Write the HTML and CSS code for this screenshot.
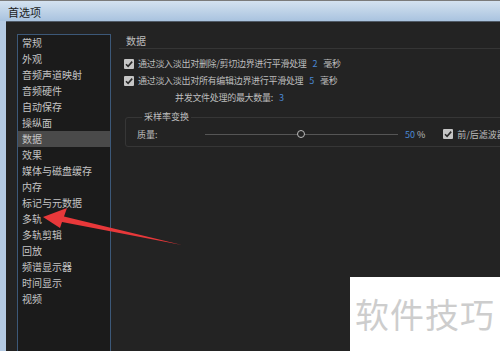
FILE: index.html
```html
<!DOCTYPE html>
<html lang="zh-CN">
<head>
    <meta charset="UTF-8">
    <meta name="viewport" content="width=device-width, initial-scale=1.0">
    <title>首选项</title>
    <link rel="stylesheet" href="styles.css">
</head>
<body>
    <div class="window">
        <div class="titlebar">首选项</div>
        <div class="frame">
            <div class="dialog">
                <!-- category list -->
                <ul class="sidebar">
                    <li>常规</li>
                    <li>外观</li>
                    <li>音频声道映射</li>
                    <li>音频硬件</li>
                    <li>自动保存</li>
                    <li>操纵面</li>
                    <li class="active">数据</li>
                    <li>效果</li>
                    <li>媒体与磁盘缓存</li>
                    <li>内存</li>
                    <li>标记与元数据</li>
                    <li>多轨</li>
                    <li>多轨剪辑</li>
                    <li>回放</li>
                    <li>频谱显示器</li>
                    <li>时间显示</li>
                    <li>视频</li>
                </ul>

                <!-- settings panel -->
                <div class="panel">
                    <div class="panel-title">数据</div>
                    <div class="row">
                        <span class="check"><svg width="10" height="10" viewBox="0 0 10 10"><path d="M2 5.2 L4.1 7.3 L8.2 2.6" fill="none" stroke="#2a2a2a" stroke-width="1.6"/></svg></span>
                        <span>通过淡入淡出对删除/剪切边界进行平滑处理</span>
                        <span class="num">2</span>
                        <span>毫秒</span>
                    </div>
                    <div class="row">
                        <span class="check"><svg width="10" height="10" viewBox="0 0 10 10"><path d="M2 5.2 L4.1 7.3 L8.2 2.6" fill="none" stroke="#2a2a2a" stroke-width="1.6"/></svg></span>
                        <span>通过淡入淡出对所有编辑边界进行平滑处理</span>
                        <span class="num">5</span>
                        <span>毫秒</span>
                    </div>
                    <div class="row indent">
                        <span>并发文件处理的最大数量:</span>
                        <span class="num">3</span>
                    </div>

                    <fieldset class="group">
                        <legend>采样率变换</legend>
                        <div class="group-row">
                            <span class="quality-label">质量:</span>
                            <div class="slider"><span class="knob"></span></div>
                            <span class="percent"><span class="num">50</span> %</span>
                            <span class="check"><svg width="10" height="10" viewBox="0 0 10 10"><path d="M2 5.2 L4.1 7.3 L8.2 2.6" fill="none" stroke="#2a2a2a" stroke-width="1.6"/></svg></span>
                            <span class="nowrap">前/后滤波器</span>
                        </div>
                    </fieldset>
                </div>
            </div>
        </div>
    </div>

    <!-- annotation arrow -->
    <svg class="arrow" width="500" height="351" viewBox="0 0 500 351">
        <polygon points="43,217 67,208 64,216.5 182,245 62,222 60,228" fill="#e8383a"/>
    </svg>

    <div class="watermark">软件技巧</div>
</body>
</html>
```

FILE: styles.css
```css
body {
    margin: 0;
    width: 500px;
    height: 351px;
    overflow: hidden;
    position: relative;
    background: #232323;
    font-family: "Noto Sans CJK SC", "Noto Sans", sans-serif;
}
.window {
    border-top: 1px solid #7b7b7b;
}
.titlebar {
    height: 20px;
    line-height: 22px;
    padding-left: 8px;
    font-size: 11px;
    color: #1c1c1c;
    background: linear-gradient(#d4e2f0, #a9c3df);
}
.frame {
    display: flex;
    height: 330px;
    border-left: 6px solid #b4cae3;
}
.dialog {
    flex: 1;
    display: flex;
    min-width: 0;
    background: #232323;
    padding: 12px 0 0 11px;
    border-top: 1px solid #505a66;
}
.sidebar {
    list-style: none;
    margin: 0;
    padding: 0;
    width: 92px;
    flex-shrink: 0;
    background: #1b1b1b;
    border: 1px solid #3c5878;
    border-bottom: none;
}
.sidebar li {
    height: 16px;
    line-height: 16px;
    padding-left: 4px;
    font-size: 10px;
    color: #c4c4c4;
}
.sidebar li.active {
    background: #4a4a4a;
}
.panel {
    flex: 1;
    min-width: 0;
    margin-left: 8px;
    font-size: 9px;
    color: #bdbdbd;
}
.panel-title {
    height: 14px;
    line-height: 14px;
    padding-left: 7px;
    font-size: 10px;
    border-bottom: 1px solid #353535;
}
.row {
    display: flex;
    align-items: center;
    gap: 3px;
    height: 17px;
    padding-left: 5px;
    white-space: nowrap;
    letter-spacing: -0.3px;
}
.row:first-of-type,
.panel-title + .row {
    margin-top: 6px;
}
.row.indent {
    padding-left: 56px;
}
.num {
    color: #4a88d4;
    margin: 0 3px;
}
.check {
    display: inline-flex;
    width: 10px;
    height: 10px;
    background: #c6c6c6;
    border-radius: 1px;
    margin-right: 1px;
}
.group {
    margin: 5px 0 0 6px;
    padding: 0 0 1px 11px;
    width: 420px;
    border: 1px solid #363636;
    border-radius: 3px;
}
.group legend {
    padding: 0 2px;
    margin-left: 5px;
    font-size: 9px;
    line-height: 12px;
    color: #bdbdbd;
}
.group-row {
    display: flex;
    align-items: center;
    height: 22px;
    white-space: nowrap;
}
.quality-label {
    width: 68px;
}
.slider {
    position: relative;
    width: 193px;
    height: 1px;
    background: #555555;
}
.knob {
    position: absolute;
    left: 92px;
    top: -4px;
    width: 6px;
    height: 6px;
    border: 1.5px solid #bcbcbc;
    border-radius: 50%;
    background: #232323;
}
.percent {
    margin-left: 7px;
    margin-right: 18px;
}
.percent .num {
    margin: 0;
}
.nowrap {
    margin-left: 3px;
}
.arrow {
    position: absolute;
    left: 0;
    top: 0;
}
.watermark {
    position: absolute;
    left: 350px;
    top: 277px;
    width: 150px;
    height: 74px;
    background: #ffffff;
    color: #cdcdcd;
    font-size: 34px;
    line-height: 74px;
    padding-left: 5px;
    box-sizing: border-box;
    white-space: nowrap;
    letter-spacing: 1px;
}
```
